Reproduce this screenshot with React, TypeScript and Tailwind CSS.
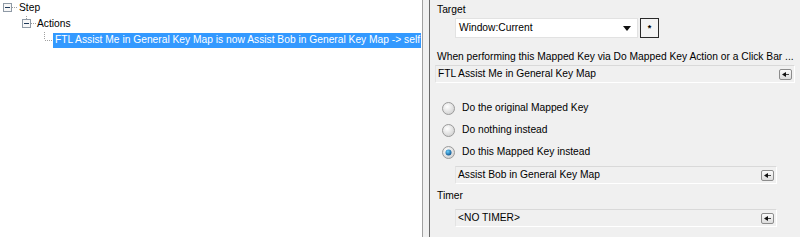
import type { ReactNode } from "react"

function MinusBox({ x, y }: { x: number; y: number }) {
  return (
    <g>
      <rect x={x + 0.5} y={y + 0.5} width={8} height={8} fill="#f7f7f7" stroke="#8f9aa6" />
      <line x1={x + 2} y1={y + 4.5} x2={x + 7} y2={y + 4.5} stroke="#1f3a5a" />
    </g>
  )
}

function SmallButton() {
  return (
    <div className="w-[13px] h-[11px] rounded-[2px] border border-[#8c8c8c] bg-gradient-to-b from-[#fbfbfb] to-[#dcdcdc] flex items-center justify-center">
      <svg width="7" height="5" viewBox="0 0 7 5">
        <path d="M0 2.5 L4 0 L4 5 Z" fill="#111" />
        <rect x="4" y="2" width="3" height="1" fill="#444" />
      </svg>
    </div>
  )
}

function Field({ children, className }: { children: ReactNode; className: string }) {
  return (
    <div
      className={
        "h-[18px] flex items-center justify-between pl-[2px] pr-[2px] border border-t-[#d9d9d9] border-l-[#e3e3e3] border-r-white border-b-white bg-[#f0f0f0] " +
        className
      }
    >
      <span>{children}</span>
      <SmallButton />
    </div>
  )
}

function Radio({ checked, label }: { checked?: boolean; label: string }) {
  return (
    <div className="h-[22px] flex items-center">
      <svg width="13" height="13" viewBox="0 0 13 13" className="ml-[7px] mr-[7px]">
        <defs>
          <radialGradient id={"rg" + label.length} cx="40%" cy="35%" r="70%">
            <stop offset="0" stopColor="#ffffff" />
            <stop offset="1" stopColor="#d0d0d0" />
          </radialGradient>
          <radialGradient id={"rb" + label.length} cx="40%" cy="35%" r="70%">
            <stop offset="0" stopColor="#6ad0ff" />
            <stop offset="1" stopColor="#0a4f8a" />
          </radialGradient>
        </defs>
        <circle cx="6.5" cy="6.5" r="6" fill={"url(#rg" + label.length + ")"} stroke="#9a9a9a" />
        {checked && <circle cx="6.5" cy="6.5" r="3" fill={"url(#rb" + label.length + ")"} />}
      </svg>
      <span>{label}</span>
    </div>
  )
}

export default function App() {
  return (
    <div className="w-[800px] h-[237px] flex overflow-hidden text-[10.25px] text-black font-['Liberation_Sans',Arial,sans-serif] leading-none">
      {/* tree */}
      <div className="w-[422px] shrink-0 bg-white">
        <div className="h-[16px] flex items-center">
          <svg width="19" height="16" className="shrink-0">
            <MinusBox x={3} y={3} />
            <line x1="12" y1="7.5" x2="18" y2="7.5" stroke="#a0a0a0" strokeDasharray="1 1" />
          </svg>
          <span>Step</span>
        </div>
        <div className="h-[16px] flex items-center">
          <svg width="37" height="16" className="shrink-0">
            <line x1="26.5" y1="0" x2="26.5" y2="3" stroke="#a0a0a0" strokeDasharray="1 1" />
            <MinusBox x={22} y={3} />
            <line x1="31" y1="7.5" x2="36" y2="7.5" stroke="#a0a0a0" strokeDasharray="1 1" />
          </svg>
          <span>Actions</span>
        </div>
        <div className="h-[16px] flex items-center">
          <svg width="53" height="16" className="shrink-0">
            <line x1="44.5" y1="0" x2="44.5" y2="8" stroke="#a0a0a0" strokeDasharray="1 1" />
            <line x1="45" y1="8.5" x2="53" y2="8.5" stroke="#a0a0a0" strokeDasharray="1 1" />
          </svg>
          <span className="h-[15px] mt-[1px] bg-[#3399ff] text-white flex items-center pl-[2px] pr-[1px] whitespace-nowrap">
            FTL Assist Me in General Key Map is now Assist Bob in General Key Map -&gt; self
          </span>
        </div>
      </div>

      {/* splitter */}
      <div className="w-[8px] shrink-0 border-l border-[#a0a0a0] border-r border-r-[#696969] bg-[#f0f0f0]" />

      {/* properties */}
      <div className="flex-1 min-w-0 bg-[#f0f0f0] pl-[5px] pr-[5px] pt-[4px]">
        <div className="pl-[2px] h-[12px] flex items-center">Target</div>
        <div className="flex items-center mt-[2px] ml-[20px] gap-[2px]">
          <div className="w-[183px] h-[20px] bg-white border border-[#e2e2e2] flex items-center justify-between pl-[3px] pr-[6px]">
            <span>Window:Current</span>
            <svg width="8" height="5" viewBox="0 0 8 5">
              <path d="M0 0 H8 L4 5 Z" fill="#111" />
            </svg>
          </div>
          <div className="w-[19px] h-[20px] border border-[#2a2a2a] bg-[#f4f4f4] flex items-center justify-center text-[9px] font-bold">
            *
          </div>
        </div>
        <div className="pl-[2px] mt-[13px] h-[12px] flex items-center whitespace-nowrap">
          When performing this Mapped Key via Do Mapped Key Action or a Click Bar ...
        </div>
        <Field className="mt-[2px] w-[360px]">FTL Assist Me in General Key Map</Field>
        <div className="mt-[14px]">
          <Radio label="Do the original Mapped Key" />
          <Radio label="Do nothing instead" />
          <Radio checked label="Do this Mapped Key instead" />
        </div>
        <Field className="mt-[3px] ml-[20px] w-[322px]">Assist Bob in General Key Map</Field>
        <div className="pl-[2px] mt-[6px] h-[12px] flex items-center">Timer</div>
        <Field className="mt-[7px] ml-[20px] w-[322px]">&lt;NO TIMER&gt;</Field>
      </div>
    </div>
  )
}
